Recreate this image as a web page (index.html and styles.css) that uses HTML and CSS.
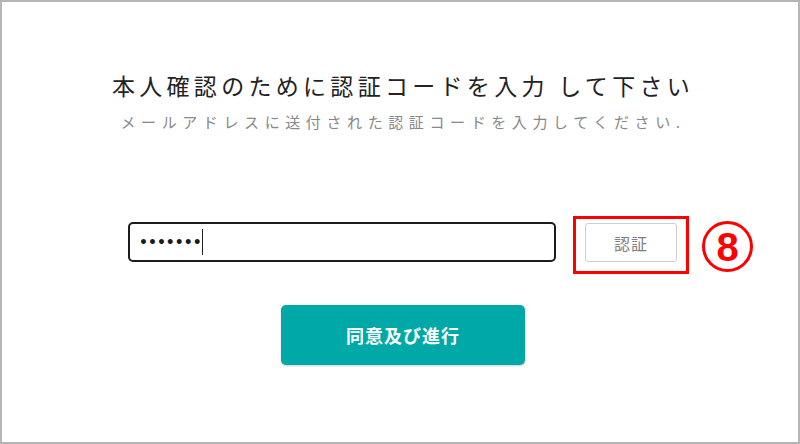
FILE: index.html
```html
<!DOCTYPE html>
<html lang="ja">
<head>
<meta charset="utf-8">
<link rel="stylesheet" href="styles.css">
</head>
<body>
<div class="page">
  <h1 class="title">本人確認のために認証コードを入力 して下さい</h1>
  <p class="subtitle">メールアドレスに送付された認証コードを入力してください.</p>
  <div class="row">
    <div class="input"><span class="dots">•••••••</span><span class="caret"></span></div>
    <div class="highlight"><button class="verify">認証</button></div>
    <div class="marker">8</div>
  </div>
  <button class="proceed">同意及び進行</button>
</div>
</body>
</html>
```
FILE: styles.css
```css
html, body { margin: 0; padding: 0; background: #fff; }
.page {
  width: 800px; height: 444px; box-sizing: border-box;
  border: 2px solid #b5b5b5;
  display: flex; flex-direction: column; align-items: center;
  padding-top: 67px;
  font-family: "Noto Sans CJK JP", "Noto Sans", sans-serif;
}
.title {
  margin: 0; font-weight: 400; font-size: 23px; line-height: 32px;
  letter-spacing: 4.3px; color: #222; padding-left: 6px;
}
.subtitle {
  margin: 11px 0 0; font-size: 15px; line-height: 20px;
  letter-spacing: 5.6px; color: #888; padding-left: 6px;
}
.row {
  align-self: flex-start; margin-left: 126px; margin-top: 84px;
  display: flex; align-items: flex-start;
}
.input {
  width: 428px; height: 40px; box-sizing: border-box; margin-top: 6px;
  border: 2.5px solid #1c1c1c; border-radius: 5px;
  display: flex; align-items: center; padding-left: 9px;
}
.dots { font-family: "DejaVu Sans", sans-serif; font-size: 14px; font-weight: 700; letter-spacing: 0; color: #1a1a1a; }
.caret { width: 1.3px; height: 26px; background: #222; margin-left: 0; }
.highlight {
  margin-left: 17px; border: 3px solid #f00; padding: 4px 9px 9px;
}
.verify {
  display: block; width: 92px; height: 39px; box-sizing: border-box;
  border: 1.5px solid #cfcfcf; border-radius: 3px; background: #fff;
  font-family: inherit; font-size: 16px; color: #808080; letter-spacing: 1px; padding: 0;
}
.marker {
  margin-left: 13px; margin-top: 5px;
  width: 51px; height: 51px; box-sizing: border-box;
  border: 3.5px solid #f00; border-radius: 50%;
  display: flex; align-items: center; justify-content: center;
  font-family: "Liberation Sans", sans-serif; font-weight: 700; font-size: 40px; color: #f00; line-height: 1;
}
.proceed {
  margin-top: 31px; margin-left: 6px;
  width: 244px; height: 60px; border: none; border-radius: 5px;
  background: #00a9a8; color: #fff; box-shadow: 0 1px 2px rgba(0,0,0,0.2);
  font-family: inherit; font-weight: 700; font-size: 18px; letter-spacing: 1px;
}
```
